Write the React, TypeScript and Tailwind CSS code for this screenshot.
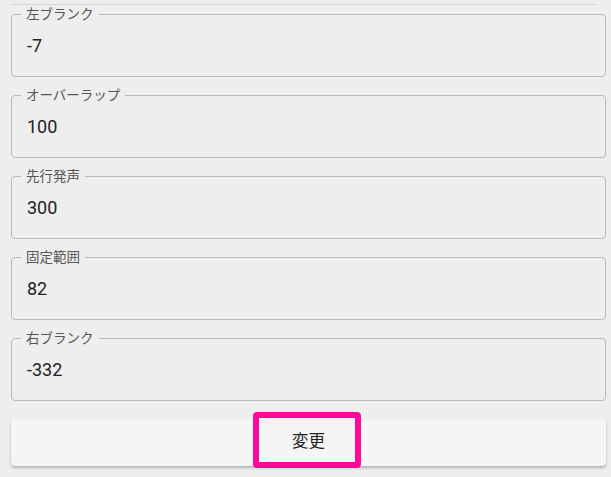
import React from "react";

const fields = [
  { label: "左ブランク", value: "-7" },
  { label: "オーバーラップ", value: "100" },
  { label: "先行発声", value: "300" },
  { label: "固定範囲", value: "82" },
  { label: "右ブランク", value: "-332" },
];

const font = {
  fontFamily: '"Roboto", "Noto Sans CJK JP", sans-serif',
};

function Field({ label, value }: { label: string; value: string }) {
  return (
    <fieldset className="border border-[#b9b9b9] rounded-[4px] px-0 pb-[18px] m-0">
      <legend className="ml-[9px] px-[5px] text-[13.5px] leading-[16px] text-[#555]">
        {label}
      </legend>
      <div className="pl-[15px] pt-[12px] text-[18px] leading-[24px] text-[#222]">
        {value}
      </div>
    </fieldset>
  );
}

export default function App() {
  return (
    <div className="w-[611px] h-[477px] bg-[#eeeeee] overflow-hidden" style={font}>
      <div className="ml-[10px] mr-[14px] pt-[4px] border-b border-[#d6d6d6]" />
      <div className="pl-[11px] pr-[5px] pt-[1px] flex flex-col gap-[10px]">
        {fields.map((f) => (
          <Field key={f.label} {...f} />
        ))}
      </div>
      <div className="pl-[11px] pr-[5px] pt-[18px]">
        <button className="relative w-full h-[47px] rounded-[4px] bg-[#f5f5f5] shadow-[0_2px_3px_rgba(0,0,0,0.25)] text-[16.5px] text-[#222] flex items-center justify-center">
          変更
          <span className="absolute left-[242px] top-[-7px] w-[108px] h-[56px] border-[6px] border-[#ff0a96] rounded-[4px]" />
        </button>
      </div>
    </div>
  );
}
